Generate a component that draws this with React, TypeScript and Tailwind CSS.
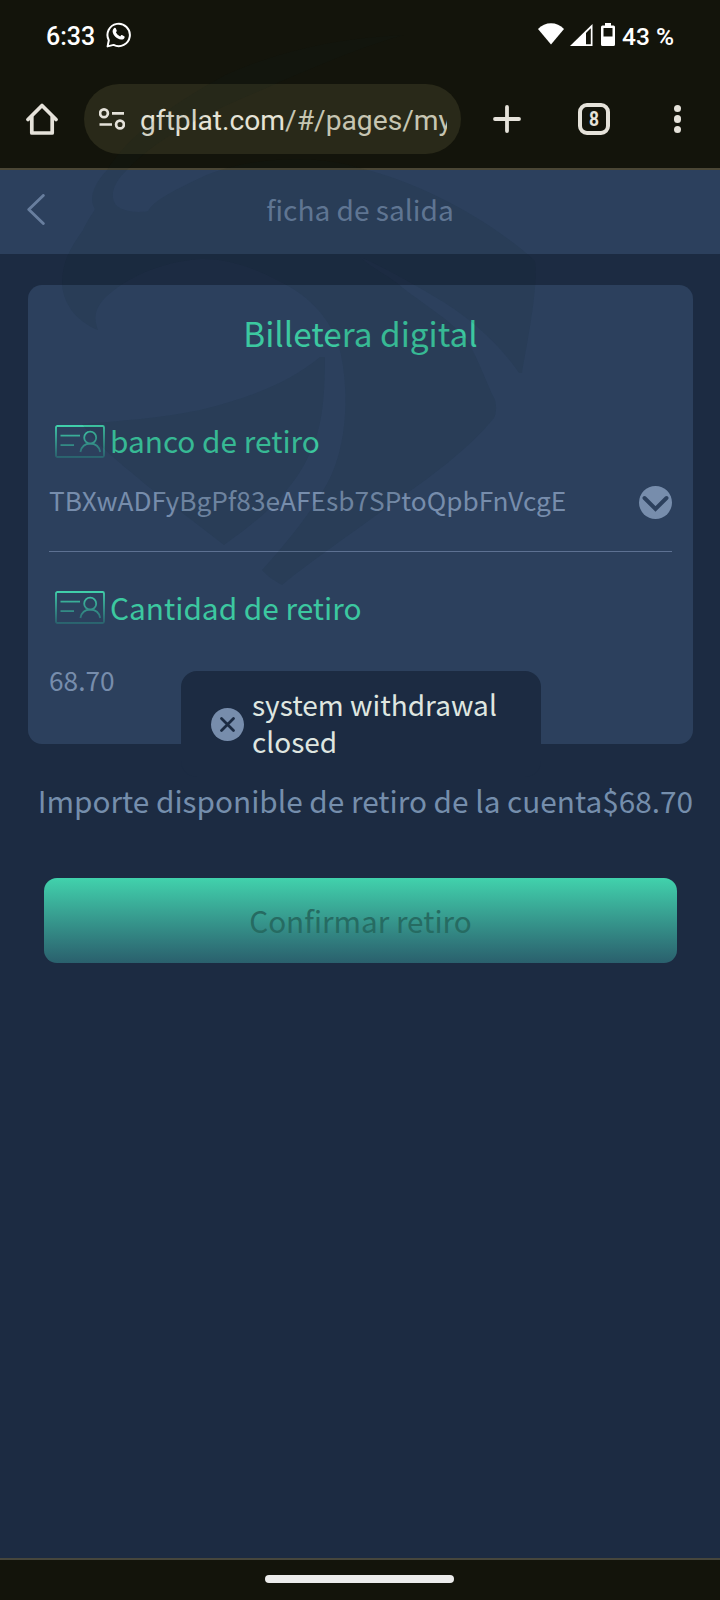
import React from 'react';

const ACCOUNT = 'TBXwADFyBgPf83eAFEsb7SPtoQpbFnVcgE';
const AMOUNT = '68.70';

function WhatsappIcon() {
  return (
    <svg className="w-[26px] h-[27px]" viewBox="0 0 26 27" fill="none">
      <path
        d="M1.6 25.4 L2.8 19.2 A11.2 11.2 0 1 1 7.6 23.9 Z"
        stroke="#fff"
        strokeWidth="2"
        strokeLinejoin="round"
      />
      <path
        d="M8.2 7.1c.5-.5 1.3-.5 1.6.2l.9 2.1c.2.5 0 .8-.8 1.9 .9 1.9 2.3 3.2 4.3 4.1 1-1.2 1.3-1.5 1.8-1.3l2.2 1.1c.5.3.6.6.4 1.2-.5 1.6-2 2.3-3.5 2.2-4.3-.5-8.2-4.5-8.5-8 0-1.5.7-2.7 1.6-3.5z"
        fill="#fff"
      />
    </svg>
  );
}

function StatusBar() {
  return (
    <div className="flex items-center justify-between h-[74px] px-[46px] text-white">
      <div className="flex items-center gap-[11px]">
        <span className="text-[25px] font-medium leading-[30px]">6:33</span>
        <div className="-mt-[5px]">
          <WhatsappIcon />
        </div>
      </div>
      <div className="flex items-center">
        <svg className="w-[26px] h-[22px] -mt-[6px]" viewBox="0 0 26 22" fill="#fff">
          <path d="M0 6 C7 -1.8 19 -1.8 26 6 L13 21.5 Z" />
        </svg>
        <svg className="w-[23px] h-[22px] ml-[6px] -mt-[5px]" viewBox="0 0 23 22">
          <path d="M0 22 L22.5 0 V22 Z" fill="#fff" />
          <path d="M16 9 L20.8 4.2 V20.3 H16 Z" fill="#13140b" />
        </svg>
        <svg className="w-[14px] h-[23px] ml-[8px] -mt-[5px]" viewBox="0 0 14 23">
          <path d="M4 0h6v2.5h2.5a1.5 1.5 0 0 1 1.5 1.5v17.5a1.5 1.5 0 0 1-1.5 1.5h-11a1.5 1.5 0 0 1-1.5-1.5V4a1.5 1.5 0 0 1 1.5-1.5H4z" fill="#fff" />
          <path d="M2.5 5h9v8.5h-9z" fill="#13140b" />
        </svg>
        <span className="ml-[7px] text-[24.5px] font-medium leading-[30px]">43 %</span>
      </div>
    </div>
  );
}

function BrowserBar() {
  return (
    <div className="flex items-center h-[94px] pl-[26px] pr-[39px] pb-[4px] text-[#e5e2da]">
      <svg className="w-[32px] h-[32px]" viewBox="0 0 32 32" fill="none" stroke="currentColor" strokeWidth="3.7" strokeLinecap="round" strokeLinejoin="round">
        <path d="M2 16.5 L16 2.5 L30 16.5" />
        <path d="M5.8 14 V30 H26.2 V14" />
      </svg>
      <div className="flex items-center w-[377px] h-[70px] ml-[26px] pl-[15px] rounded-full bg-[#292919]">
        <svg className="w-[26px] h-[22px] shrink-0" viewBox="0 0 26 22" fill="none" stroke="currentColor" strokeWidth="2.7">
          <circle cx="5" cy="5.3" r="3.9" />
          <path d="M13 5.3h12M0.5 16.5h12.5" />
          <circle cx="21" cy="16.5" r="3.9" />
        </svg>
        <div className="ml-[15px] w-[307px] overflow-hidden whitespace-nowrap text-[28.2px] leading-[36px] text-[#c6c5b2] pt-[4px]">
          <span className="text-[#e5e3d6]">gftplat.com</span>/#/pages/my
        </div>
      </div>
      <svg className="w-[28px] h-[28px] ml-[32px]" viewBox="0 0 28 28" stroke="currentColor" strokeWidth="3.8" strokeLinecap="round">
        <path d="M14 2v24M2 14h24" />
      </svg>
      <div className="flex items-center justify-center w-[32px] h-[32px] ml-[57px] rounded-[9px] border-4 border-current">
        <span className="text-[20.5px] font-bold leading-none scale-x-85">8</span>
      </div>
      <div className="flex flex-col gap-[3px] ml-auto">
        <span className="w-[7.5px] h-[7.5px] rounded-full bg-current" />
        <span className="w-[7.5px] h-[7.5px] rounded-full bg-current" />
        <span className="w-[7.5px] h-[7.5px] rounded-full bg-current" />
      </div>
    </div>
  );
}

function CardIcon({ id }: { id: string }) {
  return (
    <svg className="w-[50px] h-[33px] shrink-0" viewBox="0 0 50 33" fill="none">
      <defs>
        <linearGradient id={id} x1="0" y1="0" x2="0" y2="33" gradientUnits="userSpaceOnUse">
          <stop offset="0" stopColor="#41d2ac" />
          <stop offset="1" stopColor="#2a606d" />
        </linearGradient>
      </defs>
      <g stroke={`url(#${id})`} strokeWidth="1.8">
        <rect x="1" y="1" width="48" height="31" rx="1.5" />
        <path d="M5.5 10.7h19.5M5.5 20.1h13.5" />
        <circle cx="35.2" cy="12.7" r="6" />
        <path d="M25.4 27c1-5 4.5-8.3 9.8-8.3s9 3.3 10 8.3" />
      </g>
    </svg>
  );
}

function Toast() {
  return (
    <div className="absolute left-[181px] top-[671px] flex w-[360px] h-[106px] rounded-[16px] bg-[#1c2b42] pl-[30px] pt-[15px]">
      <svg className="w-[33px] h-[33px] mt-[22px] shrink-0" viewBox="0 0 33 33">
        <circle cx="16.5" cy="16.5" r="16.5" fill="#778dac" />
        <path d="M10.5 10.5l12 12M22.5 10.5l-12 12" stroke="#1c2b42" strokeWidth="2.8" strokeLinecap="round" />
      </svg>
      <p className="ml-[8px] w-[260px] text-[28px] leading-[37px] text-[#dfe6e0]">system withdrawal closed</p>
    </div>
  );
}

// faint emblem lying over the whole upper half of the screen
function Watermark() {
  return (
    <svg className="absolute left-0 top-0 w-[720px] h-[600px] pointer-events-none" viewBox="0 0 720 600" fill="#101f1c" fillOpacity="0.09">
      <path d="M320 357 C290 382 250 398 200 410 C160 418 120 421 82 424 C100 448 120 463 150 488 L224 545 C262 518 285 497 303 467 C320 438 325 410 325 357 Z" />
      <path d="M98 330 C78 322 64 306 62 285 C62 262 70 248 83 230 C88 219 93 213 95 209 C90 202 90 188 107 170 C125 140 165 108 225 75 C280 50 340 38 404 35 C350 50 290 78 250 95 C190 120 150 145 127 170 C112 184 110 197 116 205 C123 212 138 213 148 211 C154 201 170 192 200 178 C250 155 320 155 360 168 C420 182 490 220 534 260 C537 262 536 290 531 320 C528 340 524 360 522 373 L519 373 C500 345 472 320 445 303 C420 288 390 270 360 257 C374 270 390 276 403 288 C425 305 453 322 467 340 C478 358 486 382 495 400 C497 408 496 414 494 418 C470 448 430 478 390 505 C350 535 315 558 282 585 C275 581 268 577 262 570 C282 548 310 515 328 482 C345 450 350 400 341 355 C336 330 320 305 290 287 C260 270 230 258 200 259 C160 262 125 278 104 299 C94 310 94 320 98 330 Z" />
    </svg>
  );
}

export default function App() {
  return (
    <div className="relative flex flex-col w-[720px] h-[1600px] overflow-hidden bg-[#1c2b42] font-['Noto_Sans_CJK_SC',sans-serif]">
      <div className="h-[170px] shrink-0 bg-[#13140b] border-b-2 border-[#4a4635] font-[Roboto,sans-serif]">
        <StatusBar />
        <BrowserBar />
      </div>

      <header className="grid grid-cols-[1fr_auto_1fr] items-center h-[84px] shrink-0 px-[27px] pb-[6px] bg-[#2c405d] text-[#687e9e]">
        <svg className="w-[18px] h-[31px]" viewBox="0 0 18 31" fill="none" stroke="currentColor" strokeWidth="2.9" strokeLinecap="round" strokeLinejoin="round">
          <path d="M16.3 1.5 L1.8 15.5 L16.3 29.5" />
        </svg>
        <h1 className="text-[28.1px] leading-[40px]">ficha de salida</h1>
        <span />
      </header>

      <main className="flex flex-col flex-1">
        <section className="mt-[31px] ml-[28px] w-[665px] h-[459px] rounded-[14px] bg-[#2c405d] px-[21px] pt-[24px]">
          <h2 className="text-center text-[33.3px] leading-[48px] text-[#3cc8a0]">Billetera digital</h2>

          <div className="mt-[68px]">
            <div className="flex items-center h-[33px] ml-[5.5px]">
              <CardIcon id="bank" />
              <span className="ml-[5.5px] -mt-[4px] text-[29.8px] leading-[36px] text-[#3cc8a0]">banco de retiro</span>
            </div>
            <div className="flex items-center justify-between mt-[28px] h-[33px]">
              <span className="-mt-[5px] text-[26.25px] leading-[36px] text-[#778dac]">{ACCOUNT}</span>
              <svg className="w-[33px] h-[33px] shrink-0" viewBox="0 0 33 33" fill="none">
                <circle cx="16.5" cy="16.5" r="16.5" fill="#778dac" />
                <path d="M5.5 12 L16.5 23 L27.5 12" stroke="#2c405d" strokeWidth="3.9" strokeLinecap="round" />
              </svg>
            </div>
            <div className="mt-[32px] h-px bg-[#5d7192]" />
          </div>

          <div className="mt-[39px]">
            <div className="flex items-center h-[33px] ml-[5.5px]">
              <CardIcon id="amount" />
              <span className="ml-[5.5px] -mt-[2px] text-[29.8px] leading-[36px] text-[#3cc8a0]">Cantidad de retiro</span>
            </div>
            <div className="mt-[38px] text-[26.25px] leading-[36px] text-[#778dac]">{AMOUNT}</div>
          </div>
        </section>

        <p className="mt-[36px] pr-[27px] text-right whitespace-nowrap text-[29.75px] leading-[40px] text-[#758eac]">
          Importe disponible de retiro de la cuenta${AMOUNT}
        </p>

        <button
          type="button"
          className="mt-[58px] ml-[44px] w-[633px] h-[85px] rounded-[13px] bg-linear-to-b from-[#41d2ac] to-[#2a606d] text-[29.7px] leading-[40px] text-[#266b62]"
        >
          Confirmar retiro
        </button>
      </main>

      <div className="flex h-[42px] pl-[265px] pt-[15px] shrink-0 border-t-2 border-[#46463c] bg-[#13140b]">
        <div className="w-[189px] h-[8px] rounded-full bg-[#ececec]" />
      </div>

      <Toast />
      <Watermark />
    </div>
  );
}
